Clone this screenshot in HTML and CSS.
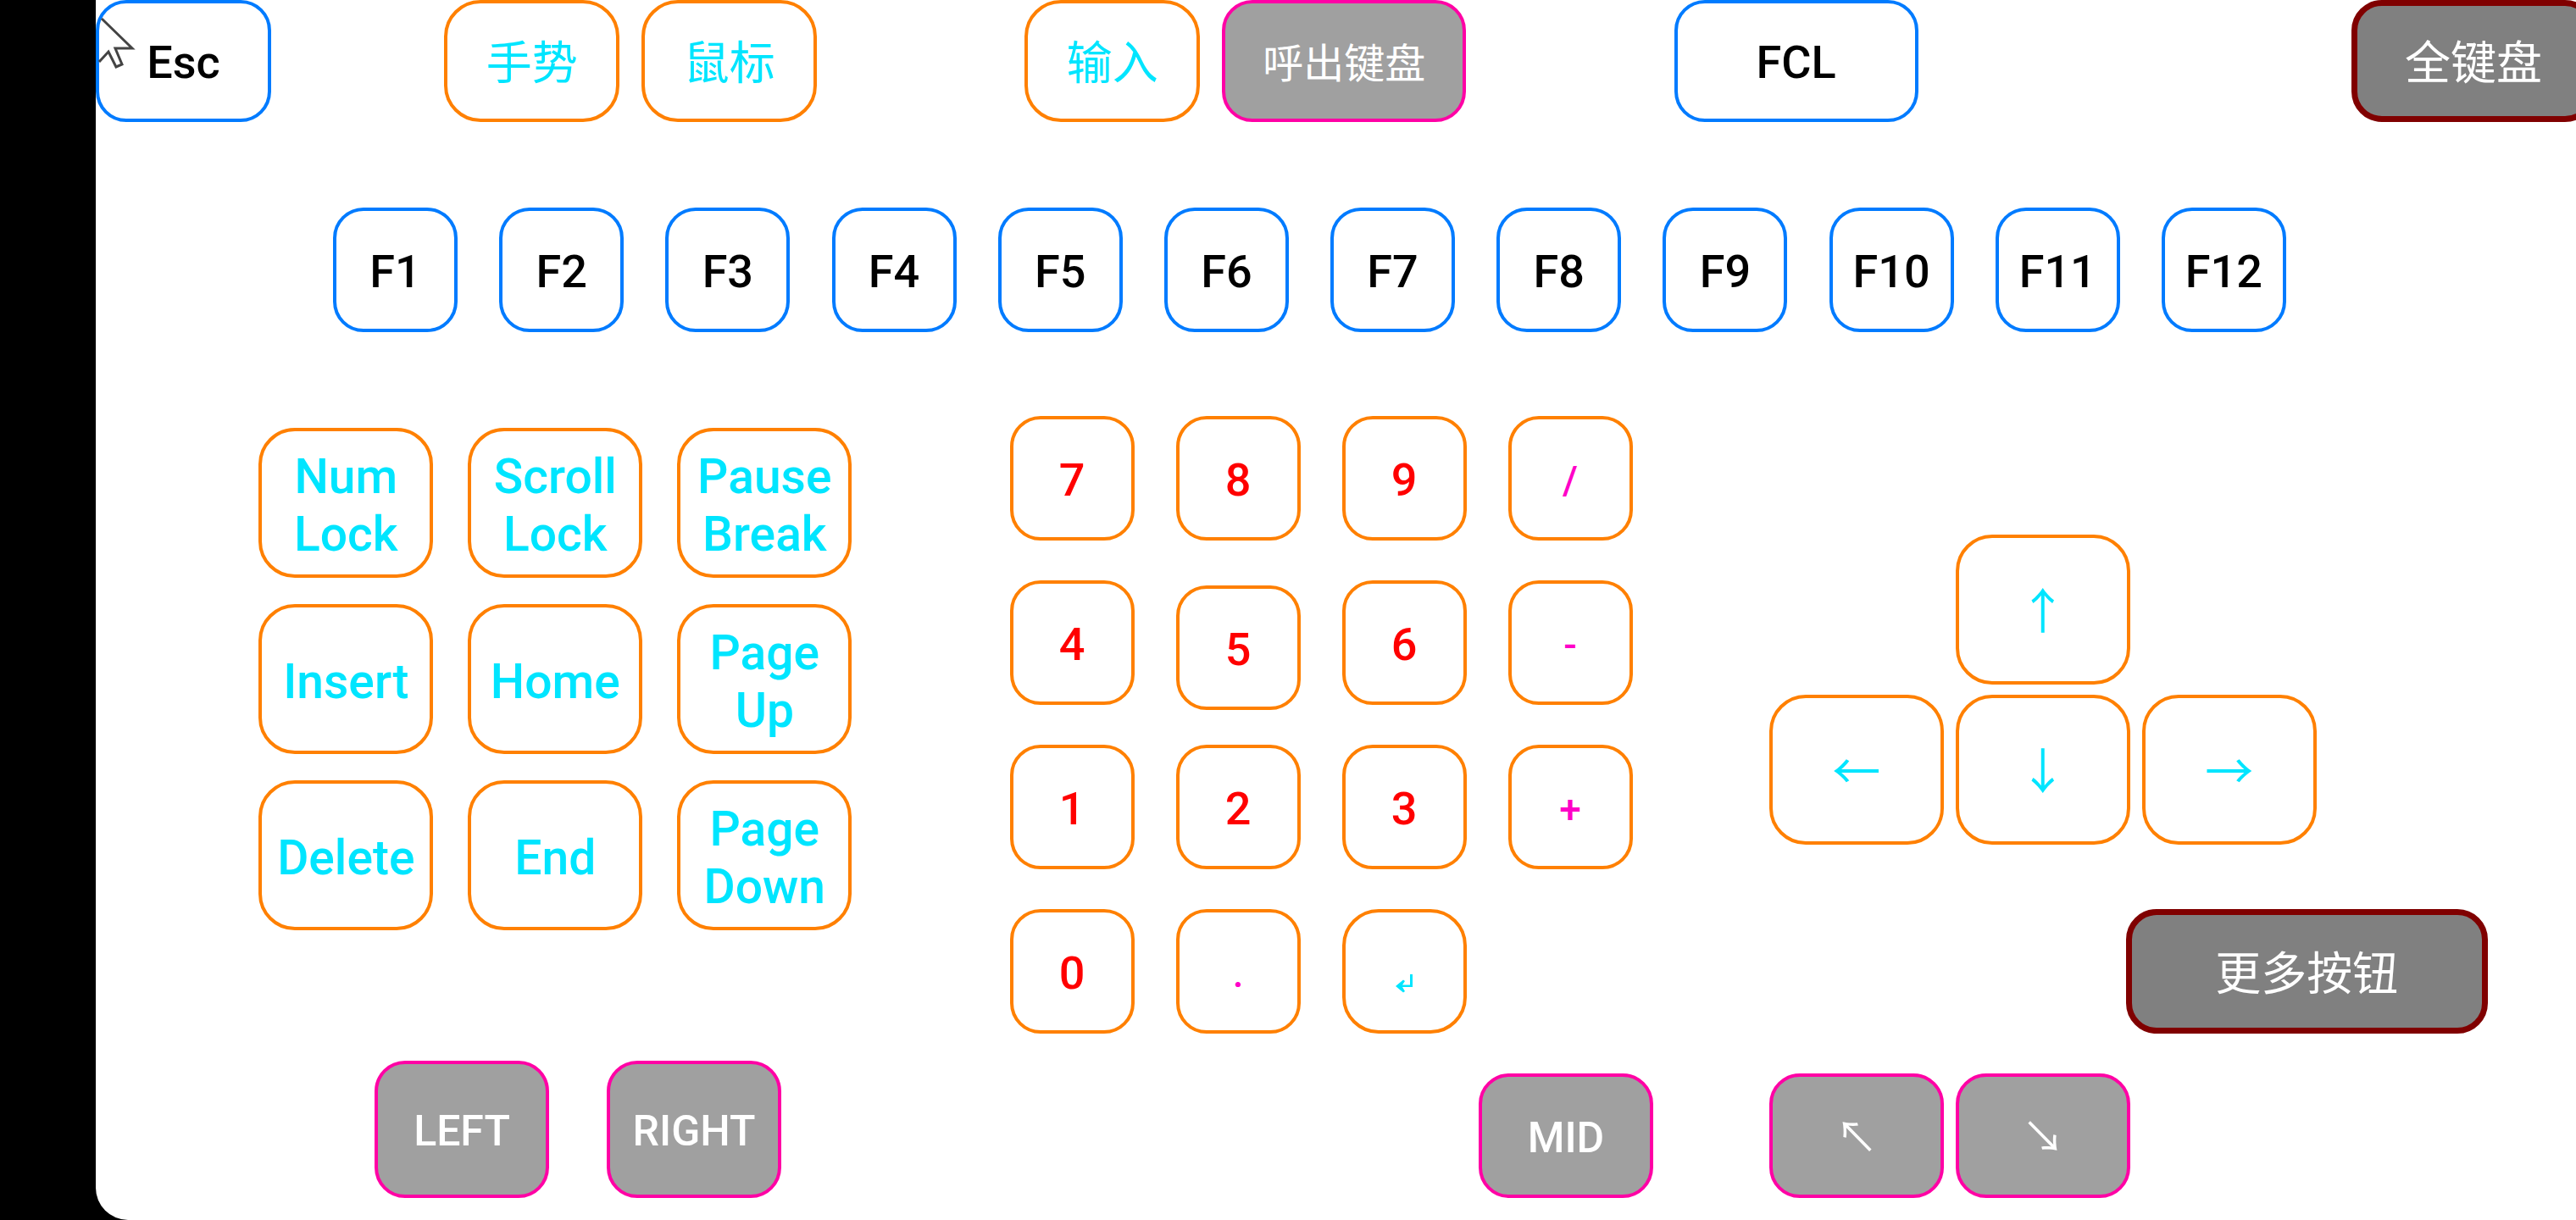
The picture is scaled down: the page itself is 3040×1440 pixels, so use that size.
FILE: index.html
```html
<!DOCTYPE html>
<html lang="zh-CN">
<head>
<meta charset="utf-8">
<meta name="viewport" content="width=device-width, initial-scale=1">
<title>FCL</title>
<link rel="stylesheet" href="styles.css">
</head>
<body>
<main class="screen">
  <div class="bar-top">
    <button class="key key-function key-medium">Esc</button>
    <div class="group">
      <button class="key key-edit key-medium text-han">手势</button>
      <button class="key key-edit key-medium text-han">鼠标</button>
    </div>
    <div class="group">
      <button class="key key-edit key-medium text-han">输入</button>
      <button class="key key-mouse key-wide text-han text-small">呼出键盘</button>
    </div>
    <button class="key key-function key-wide">FCL</button>
    <button class="key key-menu key-wide text-han">全键盘</button>
  </div>

  <div class="bar-function">
    <button class="key key-function">F1</button>
    <button class="key key-function">F2</button>
    <button class="key key-function">F3</button>
    <button class="key key-function">F4</button>
    <button class="key key-function">F5</button>
    <button class="key key-function">F6</button>
    <button class="key key-function">F7</button>
    <button class="key key-function">F8</button>
    <button class="key key-function">F9</button>
    <button class="key key-function">F10</button>
    <button class="key key-function">F11</button>
    <button class="key key-function">F12</button>
  </div>

  <div class="pads">
    <div class="pad-nav">
      <button class="key key-edit key-tall">Num Lock</button>
      <button class="key key-edit key-tall">Scroll Lock</button>
      <button class="key key-edit key-tall">Pause Break</button>
      <button class="key key-edit key-tall">Insert</button>
      <button class="key key-edit key-tall">Home</button>
      <button class="key key-edit key-tall">Page Up</button>
      <button class="key key-edit key-tall">Delete</button>
      <button class="key key-edit key-tall">End</button>
      <button class="key key-edit key-tall">Page Down</button>
    </div>

    <div class="pad-number">
      <button class="key key-digit">7</button>
      <button class="key key-digit">8</button>
      <button class="key key-digit">9</button>
      <button class="key key-operator">/</button>
      <button class="key key-digit">4</button>
      <button class="key key-digit key-home-row">5</button>
      <button class="key key-digit">6</button>
      <button class="key key-operator">-</button>
      <button class="key key-digit">1</button>
      <button class="key key-digit">2</button>
      <button class="key key-digit">3</button>
      <button class="key key-operator">+</button>
      <button class="key key-digit">0</button>
      <button class="key key-operator">.</button>
      <button class="key key-edit key-enter" aria-label="Enter">
        <svg class="enter-icon" viewBox="0 0 20 22" aria-hidden="true"><path d="M17 0H20V15H8L11 20L9 21.5L0 14L9 6.5L11 8L8 12.5H17Z"/></svg>
      </button>
    </div>

    <div class="pad-side">
      <div class="pad-arrows">
        <button class="key key-edit key-tall arrow arrow-up">↑</button>
        <button class="key key-edit key-tall arrow">←</button>
        <button class="key key-edit key-tall arrow">↓</button>
        <button class="key key-edit key-tall arrow">→</button>
      </div>
      <button class="key key-menu key-more text-han">更多按钮</button>
    </div>
  </div>

  <div class="bar-mouse">
    <div class="group group-click">
      <button class="key key-mouse key-click">LEFT</button>
      <button class="key key-mouse key-click">RIGHT</button>
    </div>
    <button class="key key-mouse">MID</button>
    <div class="group group-wheel">
      <button class="key key-mouse arrow">↖</button>
      <button class="key key-mouse arrow">↘</button>
    </div>
  </div>

  <svg class="pointer" viewBox="0 0 48 84" aria-hidden="true"><path d="M7 22L43 57H23L31 76L24 79L15 61L4 73"/></svg>
</main>
</body>
</html>
```
FILE: styles.css
```css
* {
  box-sizing: border-box;
}

body {
  margin: 0;
  background: #000;
  font-family: Roboto, "Noto Sans CJK SC", sans-serif;
}

.screen {
  position: relative;
  display: flex;
  flex-direction: column;
  min-height: 100vh;
  margin-left: 113px;
  background: #fff;
  border-bottom-left-radius: 38px;
  overflow: hidden;
}

/* Keys */
.key {
  flex: none;
  width: 147px;
  height: 147px;
  margin: 0;
  padding: 4px 0 0;
  border: 4px solid;
  border-radius: 36px;
  background: #fff;
  font: 500 54px/64px Roboto, "Noto Sans CJK SC", sans-serif;
}

.key-medium {
  width: 207px;
}

.key-wide {
  width: 288px;
}

.key-tall {
  width: 206px;
  height: 177px;
  padding: 6px 16px 0;
  font-size: 57px;
  line-height: 68px;
}

.key-function {
  border-color: #007bff;
  color: #000;
}

.key-edit {
  border-color: #ff8000;
  border-radius: 43px;
  color: #00e5ff;
}

.key-digit {
  border-color: #ff8000;
  color: #f00;
}

.key-operator {
  border-color: #ff8000;
  color: #ff00c8;
  font-size: 46px;
}

.key-mouse {
  border-color: #ff00a5;
  background: #a0a0a0;
  color: #fff;
  font-size: 50px;
}

.key-menu {
  border: 7px solid #800000;
  background: #808080;
  color: #fff;
}

.text-han {
  padding-top: 8px;
  font-weight: 400;
}

.text-small {
  font-size: 48px;
}

.arrow {
  font-weight: 400;
}

.group {
  display: flex;
  align-items: flex-end;
  gap: 26px;
}

/* Top bar: the last key runs off the right edge */
.bar-top {
  display: grid;
  grid-template-columns: auto 204fr auto 245fr auto 245fr auto 511fr auto;
  margin-right: -23px;
}

.bar-top .key {
  height: 144px;
}

.bar-top > :nth-child(1) { grid-column: 1; }
.bar-top > :nth-child(2) { grid-column: 3; }
.bar-top > :nth-child(3) { grid-column: 5; }
.bar-top > :nth-child(4) { grid-column: 7; }
.bar-top > :nth-child(5) { grid-column: 9; }

.bar-function {
  display: flex;
  justify-content: space-between;
  padding: 101px 342px 0 280px;
}

/* Three key pads side by side */
.pads {
  display: grid;
  grid-template-columns: 192fr auto 186fr auto 161fr auto 104fr;
  padding-top: 99px;
}

.pad-nav {
  grid-column: 2;
  display: grid;
  grid-template-columns: repeat(3, 206px);
  gap: 31px 41px;
  align-content: start;
  padding-top: 14px;
}

.pad-number {
  grid-column: 4;
  display: grid;
  grid-template-columns: repeat(4, 147px);
  grid-auto-rows: 147px;
  gap: 47px 49px;
}

.key-home-row {
  margin-top: 6px;
}

.key-enter {
  display: flex;
  align-items: center;
  justify-content: center;
  padding-top: 28px;
}

.enter-icon {
  width: 20px;
  height: 22px;
  fill: currentColor;
}

.pad-side {
  grid-column: 6;
  display: flex;
  flex-direction: column;
  justify-content: flex-end;
  gap: 76px;
  width: 848px;
}

.pad-arrows {
  display: grid;
  grid-template-columns: repeat(3, 206px);
  gap: 12px 14px;
}

.arrow-up {
  grid-column: 2;
}

.pad-arrows .arrow-up + .arrow {
  grid-column: 1;
}

.key-more {
  align-self: flex-end;
  width: 427px;
}

/* Mouse buttons */
.bar-mouse {
  display: grid;
  grid-template-columns: 329fr auto 823fr auto 137fr auto 526fr;
  align-items: end;
  padding-top: 32px;
}

.bar-mouse > :nth-child(1) { grid-column: 2; }
.bar-mouse > :nth-child(2) { grid-column: 4; }
.bar-mouse > :nth-child(3) { grid-column: 6; }

.bar-mouse .key {
  width: 206px;
}

.group-click {
  gap: 68px;
}

.group-wheel {
  gap: 14px;
}

.key-click {
  height: 162px;
}

.pointer {
  position: absolute;
  top: 0;
  left: 0;
  width: 48px;
  height: 84px;
  fill: none;
  stroke: #444;
  stroke-width: 3;
}
```
